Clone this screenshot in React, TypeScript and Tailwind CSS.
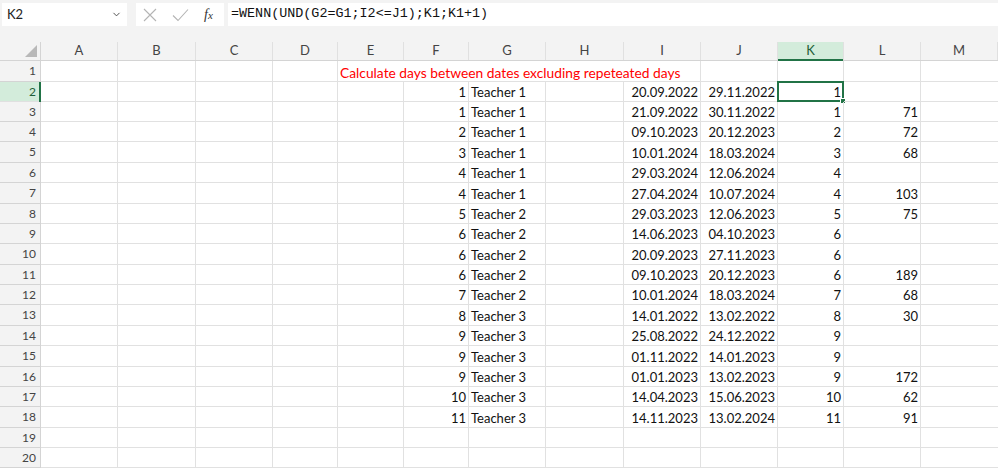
import { ChevronDown } from 'lucide-react';

const COLS = [
  { key: 'A', w: 'w-[77px]' },
  { key: 'B', w: 'w-[78px]' },
  { key: 'C', w: 'w-[77px]' },
  { key: 'D', w: 'w-[65px]' },
  { key: 'E', w: 'w-[66px]' },
  { key: 'F', w: 'w-[65px]' },
  { key: 'G', w: 'w-[77px]' },
  { key: 'H', w: 'w-[78px]' },
  { key: 'I', w: 'w-[77px]' },
  { key: 'J', w: 'w-[77px]' },
  { key: 'K', w: 'w-[66px]' },
  { key: 'L', w: 'w-[77px]' },
  { key: 'M', w: 'flex-1' },
];

// row heights alternate 20/21 to follow the 20.37px pitch of the screenshot
const ROW_H = [
  'h-[21px]', 'h-[20px]', 'h-[20px]', 'h-[20px]', 'h-[21px]',
  'h-[20px]', 'h-[21px]', 'h-[20px]', 'h-[20px]', 'h-[21px]',
  'h-[20px]', 'h-[20px]', 'h-[21px]', 'h-[20px]', 'h-[21px]',
  'h-[20px]', 'h-[20px]', 'h-[21px]', 'h-[20px]', 'h-[20px]',
];

type Row = [string, string, string, string, string, string];

const DATA: Row[] = [
  ['1', 'Teacher 1', '20.09.2022', '29.11.2022', '1', ''],
  ['1', 'Teacher 1', '21.09.2022', '30.11.2022', '1', '71'],
  ['2', 'Teacher 1', '09.10.2023', '20.12.2023', '2', '72'],
  ['3', 'Teacher 1', '10.01.2024', '18.03.2024', '3', '68'],
  ['4', 'Teacher 1', '29.03.2024', '12.06.2024', '4', ''],
  ['4', 'Teacher 1', '27.04.2024', '10.07.2024', '4', '103'],
  ['5', 'Teacher 2', '29.03.2023', '12.06.2023', '5', '75'],
  ['6', 'Teacher 2', '14.06.2023', '04.10.2023', '6', ''],
  ['6', 'Teacher 2', '20.09.2023', '27.11.2023', '6', ''],
  ['6', 'Teacher 2', '09.10.2023', '20.12.2023', '6', '189'],
  ['7', 'Teacher 2', '10.01.2024', '18.03.2024', '7', '68'],
  ['8', 'Teacher 3', '14.01.2022', '13.02.2022', '8', '30'],
  ['9', 'Teacher 3', '25.08.2022', '24.12.2022', '9', ''],
  ['9', 'Teacher 3', '01.11.2022', '14.01.2023', '9', ''],
  ['9', 'Teacher 3', '01.01.2023', '13.02.2023', '9', '172'],
  ['10', 'Teacher 3', '14.04.2023', '15.06.2023', '10', '62'],
  ['11', 'Teacher 3', '14.11.2023', '13.02.2024', '11', '91'],
];

function cellValue(row: number, col: string): { text: string; right: boolean } {
  const d = DATA[row - 2];
  if (!d) return { text: '', right: false };
  switch (col) {
    case 'F': return { text: d[0], right: true };
    case 'G': return { text: d[1], right: false };
    case 'I': return { text: d[2], right: true };
    case 'J': return { text: d[3], right: true };
    case 'K': return { text: d[4], right: true };
    case 'L': return { text: d[5], right: true };
    default: return { text: '', right: false };
  }
}

function FormulaBar() {
  return (
    <div className="h-[42px] bg-[#f3f3f3] flex items-start pt-[3px] pl-[2px]">
      <div className="w-[125px] h-[23px] bg-white flex items-center justify-between pl-[5px] pr-[5px] text-[13px] text-[#222]">
        <span>K2</span>
        <ChevronDown size={11} strokeWidth={2} className="text-[#444]" />
      </div>
      <div className="ml-[9px] w-[88px] h-[23px] bg-white flex items-center">
        <svg width="14" height="14" viewBox="0 0 14 14" className="ml-[7px]">
          <path d="M1 1 L13 13 M13 1 L1 13" stroke="#b4b4b4" strokeWidth="1.1" fill="none" />
        </svg>
        <svg width="17" height="14" viewBox="0 0 17 14" className="ml-[15px]">
          <path d="M1 7.5 L6 12.5 L16 1.5" stroke="#b4b4b4" strokeWidth="1.1" fill="none" />
        </svg>
        <span className="ml-[15px] text-[14px] italic text-[#333] font-['Liberation_Serif',serif] leading-none">
          f<span className="text-[11px]">x</span>
        </span>
      </div>
      <div className="ml-[4px] flex-1 h-[23px] bg-white flex items-center pl-[3px] font-['Liberation_Mono',monospace] text-[13.4px] text-[#111]">
        =WENN(UND(G2=G1;I2&lt;=J1);K1;K1+1)
      </div>
    </div>
  );
}

function HeaderRow() {
  return (
    <div className="flex h-[19px] bg-[#f3f3f3] border-b border-[#d4d4d4]">
      <div className="w-[41px] border-r border-[#d4d4d4] flex items-end justify-end pr-[3px] pb-[3px]">
        <svg width="12" height="12" viewBox="0 0 12 12">
          <path d="M12 0 L12 12 L0 12 Z" fill="#b8b8b8" />
        </svg>
      </div>
      {COLS.map((c) => {
        const sel = c.key === 'K';
        return (
          <div
            key={c.key}
            className={
              sel
                ? `${c.w} bg-[#d3ecdb] border-r border-[#e0e0e0] flex items-center justify-center text-[13px] text-[#1f5e38] relative`
                : `${c.w} border-r border-[#e0e0e0] flex items-center justify-center text-[13px] text-[#444]`
            }
          >
            {c.key}
            {sel && <div className="absolute left-0 right-0 -bottom-[1px] h-[2px] bg-[#217346]" />}
          </div>
        );
      })}
    </div>
  );
}

function SheetRow({ n }: { n: number }) {
  const sel = n === 2;
  return (
    <div className={`flex ${ROW_H[n - 1]}`}>
      <div
        className={
          sel
            ? 'w-[41px] bg-[#d3ecdb] border-b border-[#e0e0e0] relative flex items-center justify-end pr-[5px] text-[12px] text-[#1f5e38]'
            : 'w-[41px] bg-[#f3f3f3] border-r border-b border-[#d4d4d4] flex items-center justify-end pr-[4px] text-[12px] text-[#444]'
        }
      >
        {n}
        {sel && <div className="absolute top-0 -bottom-[1px] right-0 w-[2px] bg-[#217346]" />}
      </div>
      {COLS.map((c) => {
        const v = cellValue(n, c.key);
        const title = n === 1 && c.key === 'E';
        const noRight = (n === 1 && ['E', 'F', 'G', 'H'].includes(c.key)) || c.key === 'M';
        return (
          <div
            key={c.key}
            className={`${c.w} ${noRight ? '' : 'border-r'} border-b border-[#e1e1e1] relative flex items-end text-[13px] text-[#111] whitespace-nowrap ${
              v.right ? 'justify-end pr-[2px]' : 'justify-start pl-[2px]'
            }`}
          >
            {title ? (
              <span className="text-[#ff0000] text-[13.8px] leading-[17px]">
                Calculate days between dates excluding repeteated days
              </span>
            ) : (
              <span className="leading-[17px]">{v.text}</span>
            )}
            {sel && c.key === 'K' && (
              <div className="absolute -left-[1px] -top-[1px] -right-[1px] -bottom-[1px] border-2 border-[#217346]">
                <div className="absolute -right-[4px] -bottom-[4px] w-[6px] h-[6px] bg-[#217346] border border-white" />
              </div>
            )}
          </div>
        );
      })}
    </div>
  );
}

export default function App() {
  return (
    <div className="w-[998px] h-[468px] overflow-hidden bg-white font-['Lato',sans-serif]">
      <FormulaBar />
      <HeaderRow />
      {Array.from({ length: 20 }, (_, i) => (
        <SheetRow key={i} n={i + 1} />
      ))}
    </div>
  );
}
